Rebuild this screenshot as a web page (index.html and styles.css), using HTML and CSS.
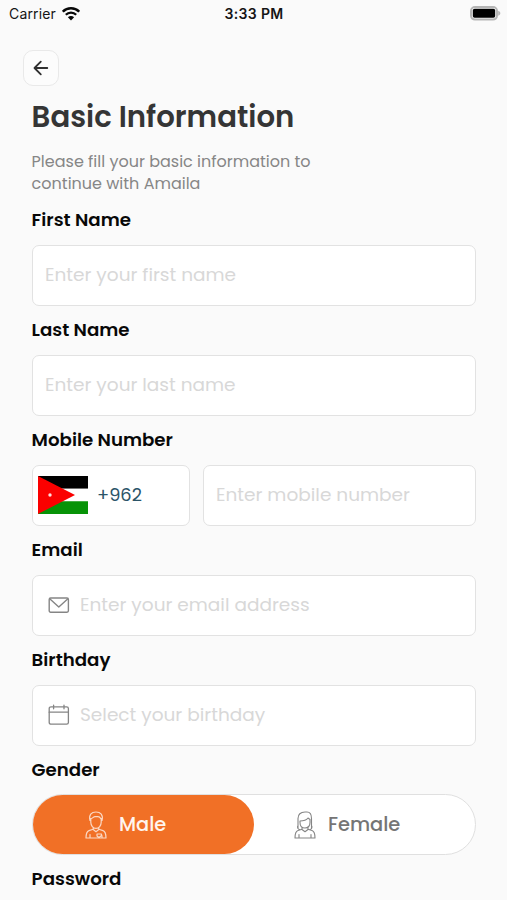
FILE: index.html
```html
<!DOCTYPE html>
<html lang="en">
<head>
<meta charset="utf-8">
<title>Basic Information</title>
<link rel="stylesheet" href="styles.css">
</head>
<body>
<header class="status">
  <div class="carrier"><span>Carrier</span>
    <svg width="18" height="14" viewBox="0 0 18 14" fill="none" stroke="#080808"><path d="M.8 4.700C5.200.2 12.800.2 17.200 4.700" stroke-width="2.500"/><path d="M3.800 7.800c2.800-2.900 7.600-2.900 10.400 0" stroke-width="2.200"/><path d="M9 13.600 5.900 10.300c1.700-1.700 4.500-1.700 6.200 0z" fill="#080808" stroke="none"/></svg>
  </div>
  <time class="time">3:33 PM</time>
  <svg class="battery" width="31" height="15" viewBox="0 0 31 15"><rect x="1" y="1" width="26" height="12.600" rx="4" fill="#fafafa" stroke="#b5b5b5" stroke-width="2"/><rect x="2.800" y="2.800" width="22.400" height="9" rx="1.800" fill="#000"/><path d="M28.200 4.800c2.800 1.100 2.800 3.900 0 5z" fill="#b5b5b5"/></svg>
</header>
<button class="back" aria-label="Back"><svg width="16" height="16" viewBox="0 0 16 16" fill="none" stroke="#303030" stroke-width="1.800" stroke-linecap="round" stroke-linejoin="round"><path d="M14.300 8H1.700M7.800 1.600 1.500 8l6.300 6.400"/></svg></button>
<main>
  <h1>Basic Information</h1>
  <p class="intro">Please fill your basic information to<br>continue with Amaila</p>
  <h2>First Name</h2>
  <div class="field"><span>Enter your first name</span></div>
  <h2>Last Name</h2>
  <div class="field"><span>Enter your last name</span></div>
  <h2>Mobile Number</h2>
  <div class="row">
    <div class="field code">
      <svg width="50" height="38" viewBox="0 0 50 38"><path fill="#000" d="M0 0h50v12.700H0z"/><path fill="#fff" d="M0 12.700h50v12.600H0z"/><path fill="#079307" d="M0 25.300h50V38H0z"/><path fill="#fb0000" d="M0 0l37 19L0 38z"/><circle cx="12" cy="19" r="1.700" fill="#ffdcdc"/></svg>
      <span class="prefix">+962</span>
    </div>
    <div class="field"><span>Enter mobile number</span></div>
  </div>
  <h2>Email</h2>
  <div class="field icon">
    <svg width="22" height="22" viewBox="0 0 22 22" fill="none" stroke="#858585" stroke-width="1.400" stroke-linejoin="round"><rect x="1.200" y="4" width="19.200" height="14.200" rx="1.400"/><path d="M1.700 4.800 10.800 13l9.100-8.200"/></svg>
    <span>Enter your email address</span>
  </div>
  <h2>Birthday</h2>
  <div class="field icon">
    <svg width="22" height="22" viewBox="0 0 22 22" fill="none" stroke="#858585" stroke-width="1.300" stroke-linecap="round"><rect x="1.200" y="2.800" width="19.200" height="17.400" rx="1.800"/><path d="M1.200 8.200h19.200M5.600 1.200v3.600M16 1.200v3.600"/></svg>
    <span>Select your birthday</span>
  </div>
  <h2 class="gender-label">Gender</h2>
  <div class="gender">
    <div class="option male">
      <svg width="22" height="28" viewBox="0 0 22 28" fill="none" stroke="#fbd8c4" stroke-width="1.200" stroke-linecap="round" stroke-linejoin="round"><path d="M5 9.500C3.500 4 6.500 1 11 1s7.500 3 6 8.500M5.800 7.500v3.800c0 3.300 2.200 6 5.200 6s5.200-2.700 5.200-6V7.500M5.800 8C8 7 8.500 5.700 10 5.700h3c1.500 0 2.200 1 3.200 2.300M8.200 16.500v2l2.800 2.300 2.800-2.300v-2M8.200 18.300 4 19.600c-2.300.8-3 3-3 7.400h20c0-4.400-.7-6.600-3-7.400l-4.200-1.300M5 23.500V27M17 24.500V27M12 23h4.500v1.500L14 26.500l-2-1.500z"/></svg>
      <span>Male</span>
    </div>
    <div class="option female">
      <svg width="22" height="28" viewBox="0 0 22 28" fill="none" stroke="#858585" stroke-width="1.100" stroke-linecap="round" stroke-linejoin="round"><path d="M4 17.500V7.500C4 3.500 6.500 1 11 1h2c3 0 4.500 2.500 4.500 6.500v10M6 10v1.500c0 3.300 2 5.500 5 5.500s5-2.200 5-5.500V8.500M6 10c3 0 6.500-1 8-3l2 1.500M4 14.500c-1.200 2 0 3.700 1.500 4M17.500 14.500c1.200 2 0 3.700-1.500 4M8 16.500v2l3 2.300 3-2.300v-2M8 18.300l-4 1.300c-2.300.8-3 3-3 7.400h20c0-4.400-.7-6.600-3-7.400l-4-1.300M5 23.500V27M17 23.500V27"/></svg>
      <span>Female</span>
    </div>
  </div>
  <h2>Password</h2>
</main>
</body>
</html>
```

FILE: styles.css
```css
* { box-sizing: border-box; }
html { overflow: hidden; }
body { margin: 0; height: 900px; overflow: hidden; background: #fafafa; font-family: Poppins, Inter, "Open Sans", sans-serif; }
svg { display: block; flex: none; }
h1, h2, p { margin: 0 0 0 -.4px; white-space: nowrap; }
.status { height: 27px; padding: 0 6px 0 9px; display: grid; grid-template-columns: 1fr auto 1fr; align-items: center; color: #151515; }
.carrier { display: flex; align-items: center; gap: 6px; font: 400 14px Inter, sans-serif; letter-spacing: .15px; }
.time { margin-right: 2px; font: 600 14px Inter, sans-serif; letter-spacing: .35px; }
.battery { justify-self: end; }
.back { display: flex; align-items: center; justify-content: center; width: 36px; height: 36px; margin: 23px 0 0 23px; padding: 0; border: 1px solid #e9e9e9; border-radius: 10px; background: #fcfcfc; }
main { padding: 9px 31px 0 32px; }
h1 { height: 45px; font-size: 29.2px; line-height: 43px; font-weight: 600; color: #353535; }
.intro { margin-top: 11px; margin-bottom: 1px; height: 44px; font-size: 16px; line-height: 22px; font-weight: 400; color: #868686; }
h2 { height: 49px; font-size: 18.2px; line-height: 47px; font-weight: 600; color: #080808; }
.field { height: 61px; border: 1px solid #e2e2e2; border-radius: 7px; background: #fff; display: flex; align-items: center; flex: 1; padding: 0 0 2px 12px; font-size: 18.5px; font-weight: 400; color: #d8d8d8; white-space: nowrap; }
.row { display: flex; gap: 13px; }
.code { flex: 0 0 158px; padding-left: 5px; gap: 9px; color: #2b5468; }
.prefix { font-size: 17.8px; }
.icon { padding-left: 15px; gap: 10px; }
.gender-label { height: 48px; }
.gender { height: 61px; border: 1px solid #e0e0e0; border-radius: 31px; background: #fff; display: flex; }
.option { display: flex; align-items: center; gap: 12px; font-size: 19.4px; font-weight: 500; flex: 1; padding-left: 40px; }
.male { flex: 0 0 221px; padding-left: 52px; background: #f17026; color: #fff5ee; border-radius: 30px; }
.female { color: #757575; }
```
